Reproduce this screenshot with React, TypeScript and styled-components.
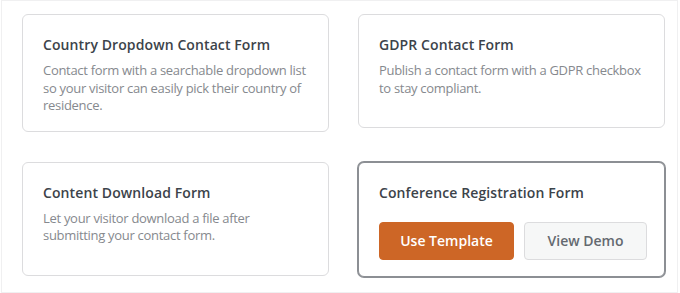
import React from 'react'
import styled, { createGlobalStyle, css } from 'styled-components'

const GlobalStyle = createGlobalStyle`
  html, body {
    margin: 0;
    padding: 0;
    background: #ffffff;
  }
  body {
    font-family: 'Open Sans', 'Liberation Sans', sans-serif;
    -webkit-font-smoothing: antialiased;
  }
`

const Panel = styled.div`
  box-sizing: border-box;
  width: 677px;
  height: 293px;
  margin-left: 1px;
  padding: 13px 0 0 20px;
  border: 1px solid #f0f0f1;
  background: #ffffff;
`

const Grid = styled.div`
  display: grid;
  grid-template-columns: 307px 307px;
  column-gap: 29px;
  row-gap: 30px;
  align-items: start;
`

const Card = styled.div<{ $active?: boolean }>`
  box-sizing: border-box;
  min-height: 114px;
  padding: 20px 16px 16px 20px;
  border: 1px solid #dcdcde;
  border-radius: 6px;
  background: #ffffff;
  ${props =>
    props.$active &&
    css`
      border-color: #8c8f94;
      box-shadow: 0 0 0 1px #8c8f94;
    `}
`

const Title = styled.h3`
  margin: 0;
  font-size: 14px;
  line-height: 20px;
  font-weight: 600;
  letter-spacing: 0.1px;
  color: #3c434a;
`

const Description = styled.p`
  margin: 7px 0 0;
  font-size: 13px;
  line-height: 17.5px;
  font-weight: 400;
  letter-spacing: -0.3px;
  white-space: nowrap;
  color: #86898e;
`

const Actions = styled.div`
  display: flex;
  gap: 10px;
  margin-top: 19px;
`

const Button = styled.button<{ $primary?: boolean }>`
  box-sizing: border-box;
  height: 38px;
  padding: 0;
  border-radius: 4px;
  font-family: inherit;
  font-size: 14px;
  font-weight: 600;
  cursor: pointer;
  ${props =>
    props.$primary
      ? css`
          width: 135px;
          background: #cd6626;
          border: 1px solid #cd6626;
          color: #ffffff;
        `
      : css`
          width: 123px;
          background: #f6f7f7;
          border: 1px solid #dcdcde;
          color: #646970;
        `}
`

type Template = {
  title: string
  lines: string[]
  active?: boolean
}

const templates: Template[] = [
  {
    title: 'Country Dropdown Contact Form',
    lines: [
      'Contact form with a searchable dropdown list',
      'so your visitor can easily pick their country of',
      'residence.',
    ],
  },
  {
    title: 'GDPR Contact Form',
    lines: ['Publish a contact form with a GDPR checkbox', 'to stay compliant.'],
  },
  {
    title: 'Content Download Form',
    lines: ['Let your visitor download a file after', 'submitting your contact form.'],
  },
  {
    title: 'Conference Registration Form',
    lines: [],
    active: true,
  },
]

export default function App() {
  return (
    <>
      <GlobalStyle />
      <Panel>
        <Grid>
          {templates.map(t => (
            <Card key={t.title} $active={t.active}>
              <Title>{t.title}</Title>
              {t.active ? (
                <Actions>
                  <Button $primary>Use Template</Button>
                  <Button>View Demo</Button>
                </Actions>
              ) : (
                <Description>
                  {t.lines.map((line, i) => (
                    <React.Fragment key={i}>
                      {i > 0 && <br />}
                      {line}
                    </React.Fragment>
                  ))}
                </Description>
              )}
            </Card>
          ))}
        </Grid>
      </Panel>
    </>
  )
}
